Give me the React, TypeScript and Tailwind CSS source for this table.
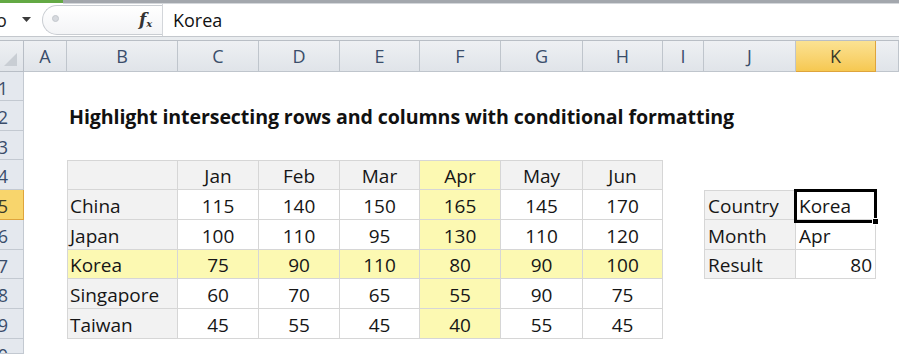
import React from 'react';

const W = ['w-[43px]', 'w-[111px]', 'w-[81px]', 'w-[81px]', 'w-[80px]', 'w-[81px]', 'w-[82px]', 'w-[80px]', 'w-[41px]', 'w-[92px]', 'w-[80px]', 'w-[23px]'];
const H = ['h-[29px]', 'h-[30px]', 'h-[29px]', 'h-[30px]', 'h-[30px]', 'h-[30px]', 'h-[29px]', 'h-[30px]', 'h-[30px]', 'h-[15px]'];
const LETTERS = ['A', 'B', 'C', 'D', 'E', 'F', 'G', 'H', 'I', 'J', 'K', ''];
const MONTHS = ['Jan', 'Feb', 'Mar', 'Apr', 'May', 'Jun'];
const DATA: (string | number)[][] = [
  ['China', 115, 140, 150, 165, 145, 170],
  ['Japan', 100, 110, 95, 130, 110, 120],
  ['Korea', 75, 90, 110, 80, 90, 100],
  ['Singapore', 60, 70, 65, 55, 90, 75],
  ['Taiwan', 45, 55, 45, 40, 55, 45],
];
const LOOKUP: [string, string][] = [
  ['Country', 'Korea'],
  ['Month', 'Apr'],
  ['Result', '80'],
];

function cellFor(r: number, c: number): { cls: string; content: React.ReactNode } {
  // table B4:H9
  if (r >= 4 && r <= 9 && c >= 1 && c <= 7) {
    let cls = 'border-r border-b border-[#d6d6d6] pt-[3px]';
    if (c === 1) cls += ' border-l';
    if (r === 4) cls += ' border-t';
    if (c === 5 || r === 7) cls += ' bg-[#fcf9b2]';
    else if (r === 4 || c === 1) cls += ' bg-[#f2f2f2]';
    else cls += ' bg-white';
    let content: React.ReactNode = null;
    if (r === 4) {
      cls += ' justify-center';
      content = c === 1 ? '' : MONTHS[c - 2];
    } else {
      const v = DATA[r - 5][c - 1];
      if (c === 1) cls += ' justify-start pl-[2px]';
      else cls += ' justify-center';
      content = v;
    }
    return { cls, content };
  }
  // lookup J5:K7
  if (r >= 5 && r <= 7 && (c === 9 || c === 10)) {
    let cls = 'border-r border-b border-[#d6d6d6] pt-[3px]';
    if (c === 9) cls += ' border-l bg-[#f2f2f2] pl-[3px] justify-start';
    if (r === 5) cls += ' border-t';
    const [label, value] = LOOKUP[r - 5];
    if (c === 9) return { cls, content: label };
    if (r === 7) return { cls: cls + ' justify-end pr-[3px]', content: value };
    if (r === 5) {
      return {
        cls: cls + ' justify-start pl-[3px] relative',
        content: (
          <>
            <span>{value}</span>
            <span className="absolute left-[-2px] top-[-2px] w-[83px] h-[34px] border-[3px] border-black" />
            <span className="absolute left-[76px] top-[27px] w-[7px] h-[7px] bg-black border border-white" />
          </>
        ),
      };
    }
    return { cls: cls + ' justify-start pl-[3px]', content: value };
  }
  if (r === 2 && c === 1) {
    return {
      cls: 'justify-start pl-[2px] pt-[2px] overflow-visible whitespace-nowrap',
      content: (
        <span className="font-bold text-[19.6px] tracking-[-0.1px] text-[#111]">
          Highlight intersecting rows and columns with conditional formatting
        </span>
      ),
    };
  }
  return { cls: '', content: null };
}

export default function App() {
  return (
    <div className="w-[899px] h-[354px] overflow-hidden bg-white font-['Open_Sans',sans-serif] text-[#161616] flex flex-col">
      {/* top strip */}
      <div className="h-[4px] flex shrink-0">
        <div className="w-[63px] bg-[#63a944] h-[3px]" />
        <div className="flex-1 flex flex-col">
          <div className="h-[3px] bg-[#a3a7ad]" />
          <div className="h-[1px] bg-[#d4d7db]" />
        </div>
      </div>
      {/* formula bar */}
      <div className="h-[32px] flex shrink-0 bg-white">
        <div className="w-[42px] relative overflow-hidden flex items-center">
          <span className="absolute left-[-4px] top-[3px] text-[18px] text-[#222]">o</span>
          <svg className="absolute left-[22px] top-[13px]" width="9" height="6" viewBox="0 0 9 6">
            <path d="M0 0 L9 0 L4.5 5 Z" fill="#3b3b3b" />
          </svg>
        </div>
        <div className="w-[120px] h-[30px] mt-[1px] relative rounded-l-[15px] border border-r-0 border-[#c9cdd2] bg-linear-to-b from-white to-[#f3f4f6]">
          <span className="absolute left-[9px] top-[9px] w-[7px] h-[7px] rounded-full bg-[#d6d9de] border border-[#c3c7cc]" />
          <span className="absolute left-[96px] top-[2px] font-['DejaVu_Serif',serif] italic font-bold text-[17px] text-[#333] leading-none pt-[3px]">
            f<span className="text-[10px] align-[-2px]">x</span>
          </span>
        </div>
        <div className="w-[1px] bg-[#d3d6da]" />
        <div className="flex-1 flex items-center pl-[10px] text-[18px] text-[#111]">Korea</div>
      </div>
      {/* separator band */}
      <div className="h-[5px] shrink-0 border-t border-[#c4c8cd] bg-[#e9ecef] border-b border-b-[#b9bec5]" />
      {/* column header */}
      <div className="h-[31px] flex shrink-0">
        <div className="w-[24px] relative border-r border-b border-[#b8bec6] bg-linear-to-b from-[#eef0f3] to-[#e0e4e9] overflow-hidden">
          <svg className="absolute left-[4px] top-[12px]" width="13" height="13" viewBox="0 0 13 13">
            <path d="M13 0 L13 13 L0 13 Z" fill="#c9ced4" />
          </svg>
        </div>
        {LETTERS.map((l, i) => (
          <div
            key={i}
            className={
              W[i] +
              ' flex items-center justify-center border-r border-b text-[18px] pt-[1px] ' +
              (l === 'K'
                ? 'bg-linear-to-b from-[#fbe292] to-[#f6c850] border-[#dea43c] text-[#3a3a2a]'
                : 'bg-linear-to-b from-[#eef0f3] to-[#e0e4e9] border-[#bfc5cc] text-[#3a4d6a]')
            }
          >
            {l}
          </div>
        ))}
      </div>
      {/* rows */}
      {H.map((h, ri) => {
        const r = ri + 1;
        return (
          <div key={r} className={h + ' flex shrink-0'}>
            <div
              className={
                'w-[24px] overflow-hidden border-r border-b ' +
                (r === 5 ? 'bg-[#f8d56c] border-[#dea43c] text-[#3a3a2a]' : 'bg-[#e4e8ee] border-[#c3c9d1] text-[#3a4d6a]')
              }
            >
              <div className="h-[30px] w-[8px] pt-[2px] flex items-center justify-end whitespace-nowrap text-[18px]">{r}</div>
            </div>
            {W.map((w, c) => {
              const { cls, content } = cellFor(r, c);
              return (
                <div key={c} className={w + ' flex items-center text-[19px] ' + cls}>
                  {content}
                </div>
              );
            })}
          </div>
        );
      })}
    </div>
  );
}
